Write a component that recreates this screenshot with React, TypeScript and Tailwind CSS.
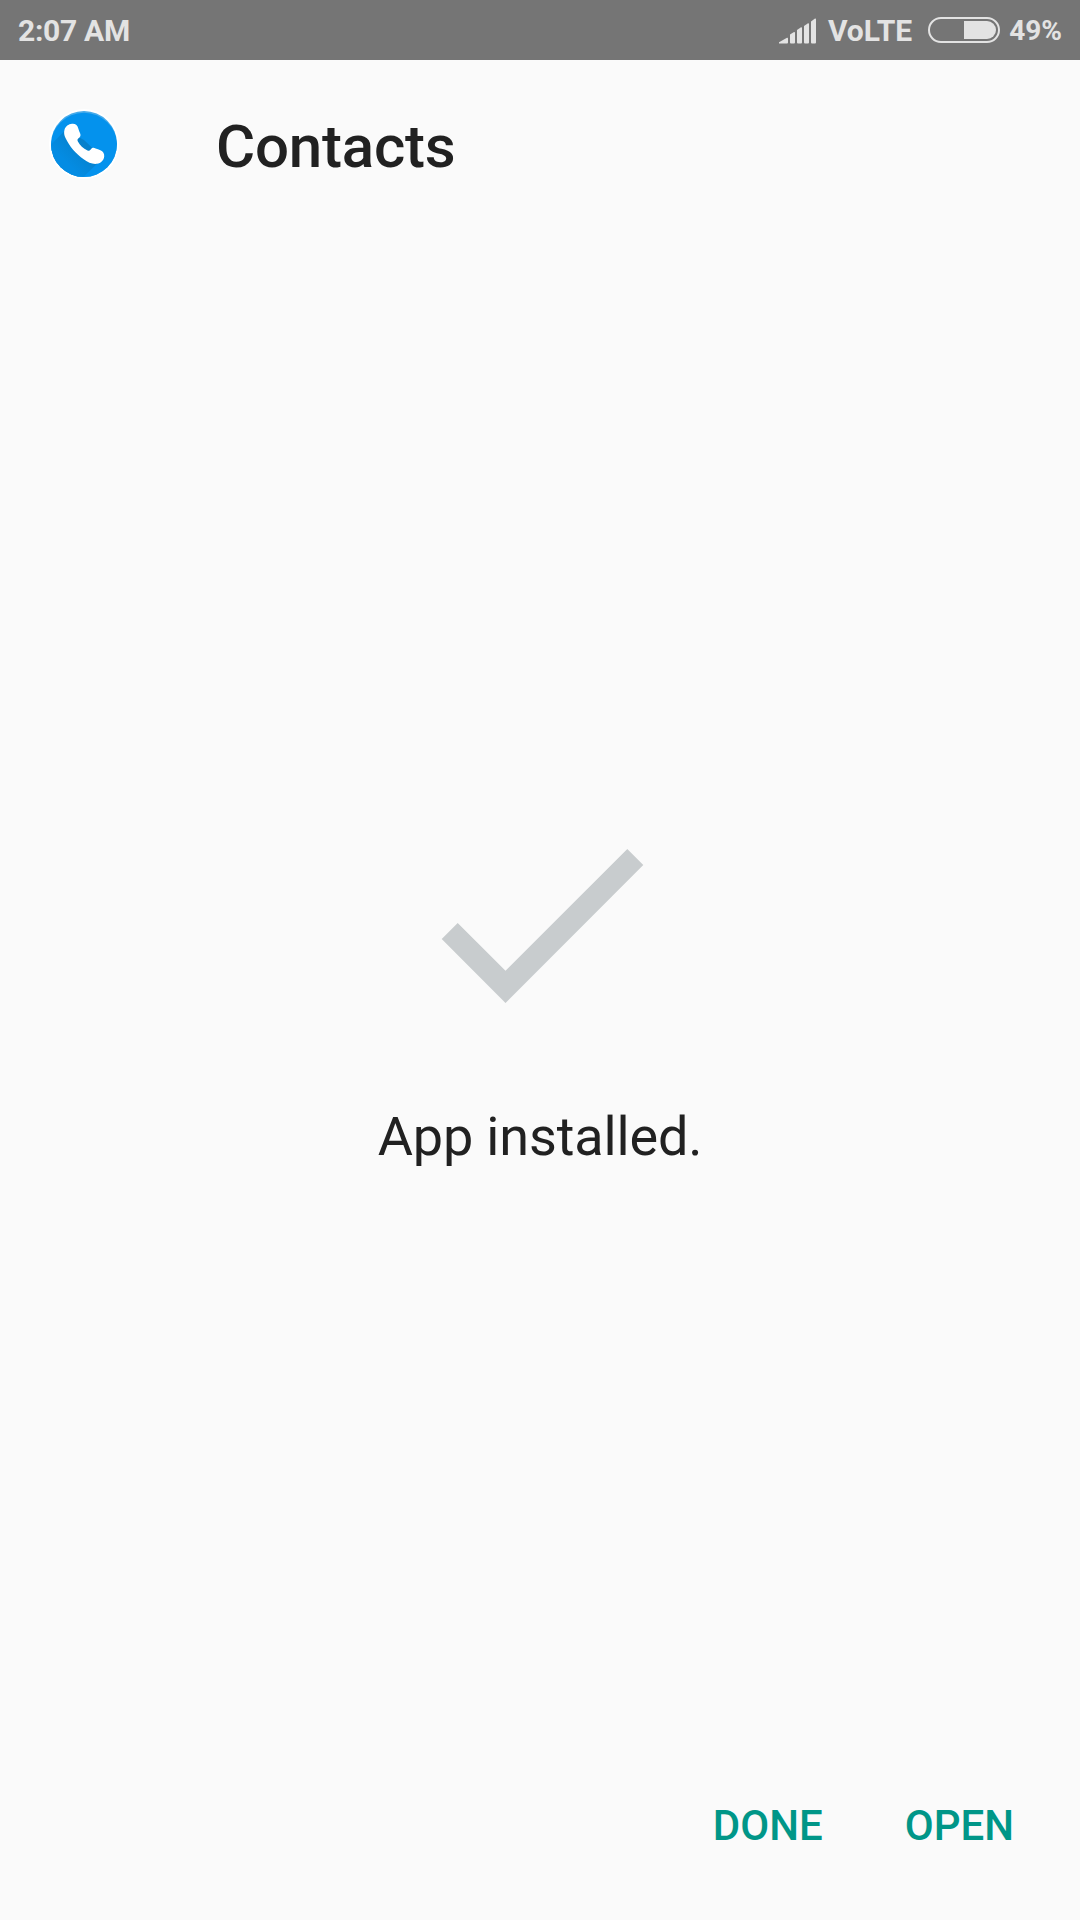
function SignalIcon() {
  return (
    <svg width="38" height="26" viewBox="0 0 38 26" fill="#e3e3e3" className="mt-[17.5px] block">
      <path d="M0 25.5v-1.2L8 19.8q1-.3 1 .7V24.500q0 1-1 1z" />
      <path d="M11 16.500L15 14q1-.2 1 .8v9.700q0 1-1 1h-3q-1 0-1-1z" />
      <path d="M18 12L22 9.300q1-.2 1 .8v14.400q0 1-1 1h-3q-1 0-1-1z" />
      <path d="M25 8L29 5.200q1-.2 1 .8v18.500q0 1-1 1h-3q-1 0-1-1z" />
      <path d="M32 3.500L36 .5q1-.2 1 .8v23.200q0 1-1 1h-3q-1 0-1-1z" />
    </svg>
  );
}

function BatteryIcon() {
  return (
    <svg width="72" height="26" viewBox="0 0 72 26" className="mt-[17px] block">
      <rect x="1" y="1" width="70" height="24" rx="12" fill="none" stroke="#e3e3e3" strokeWidth="2" />
      <path d="M36 4h23a9 9 0 0 1 0 18H36z" fill="#e3e3e3" />
    </svg>
  );
}

function PhoneIcon() {
  return (
    <svg width="72" height="72" viewBox="0 0 72 72" className="block">
      <defs>
        <clipPath id="disc">
          <circle cx="36" cy="36" r="33" />
        </clipPath>
        <linearGradient id="shade" x1="34" y1="34" x2="16" y2="52" gradientUnits="userSpaceOnUse">
          <stop offset="0" stopColor="#0680cb" />
          <stop offset="1" stopColor="#048ce3" />
        </linearGradient>
      </defs>
      <circle cx="36" cy="36" r="35" fill="#fff" />
      <g clipPath="url(#disc)">
        <rect width="72" height="72" fill="#45aaea" />
        <circle cx="36" cy="38" r="33.300" fill="#0492ed" />
        <path d="M17.500 22L-8 47.500V80H24L55 50L36 32z" fill="url(#shade)" />
      </g>
      <path
        d="M24 15.800c3.500-.3 5.600 1.400 6.300 4.600.4 1.600 1.200 3.200 1.800 4.800.9 2.300.4 3.600-1.600 5.100-1.200.9-1.300 1.900-.6 3.300 2 4 5.300 7.100 9.600 8.900 1.300.5 2.200.3 3-.8 1.500-2 3-2.300 5.100-1.300 1.600.7 3.200 1 4.800 1.800 2.700 1.100 4.100 3.400 3.800 6.300-.3 3.800-3.300 6.600-7.200 7.300-4.800.6-9-1.500-13-4.300C27.500 45.600 21.500 38.500 17.500 30c-1.300-2.800-1.800-5.300-1-8.200.9-3.400 4-5.700 7.500-6z"
        fill="#fff"
      />
    </svg>
  );
}

export default function App() {
  return (
    <div className="flex h-[1920px] w-[1080px] flex-col overflow-hidden bg-[#fafafa] font-['Roboto',sans-serif] text-[#212121]">
      <div className="flex h-[60px] shrink-0 items-start bg-[#757575] px-[18px] font-bold text-[#e3e3e3]">
        <span className="mt-[1px] text-[30px] leading-[60px] tracking-[-0.3px]">2:07 AM</span>
        <div className="ml-auto flex items-start">
          <SignalIcon />
          <span className="mt-[1px] ml-[11px] text-[30px] leading-[60px]">VoLTE</span>
          <span className="ml-[16px]">
            <BatteryIcon />
          </span>
          <span className="mt-[1px] ml-[9px] text-[28px] leading-[60px]">49%</span>
        </div>
      </div>
      <header className="flex h-[168px] shrink-0 items-start pt-[48px] pl-[48px]">
        <PhoneIcon />
        <h1 className="mt-[1px] ml-[96px] text-[60px] leading-[76px] font-medium tracking-[-0.2px]">Contacts</h1>
      </header>
      <main className="flex flex-1 flex-col items-center pt-[620px]">
        <svg width="204" height="156" viewBox="0 0 204 156" fill="#c8ccce" className="ml-[4px] block">
          <path d="M1.700 91L17.700 75L65.500 122.700L187.300 1L203.300 17L65.500 155z" />
        </svg>
        <p className="mt-[101px] text-[54px] leading-[64px] tracking-[-0.15px]">App installed.</p>
      </main>
      <footer className="flex h-[190px] shrink-0 items-start justify-end gap-[82px] pt-[66px] pr-[66px] text-[42px] leading-[60px] font-medium text-[#009688]">
        <button>DONE</button>
        <button>OPEN</button>
      </footer>
    </div>
  );
}
